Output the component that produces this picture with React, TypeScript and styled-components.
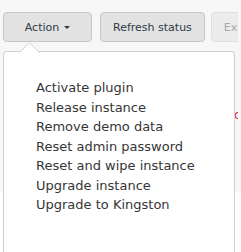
import React from "react";
import styled, { createGlobalStyle } from "styled-components";

const Global = createGlobalStyle`
  html, body { margin: 0; padding: 0; background: #ffffff; }
  body { font-family: "DejaVu Sans", "Noto Sans", sans-serif; font-size: 13px; color: #333; }
`;

const Page = styled.div`
  position: relative;
  width: 241px;
  height: 252px;
  overflow: hidden;
  background: #ffffff;
`;

const Panel = styled.div`
  height: 192px;
  background: #f7f7f7;
  padding: 12px 3px 0;
  box-sizing: border-box;
`;

const Toolbar = styled.div`
  display: flex;
  align-items: center;
  overflow: hidden;
`;

const Button = styled.button<{ $wide?: boolean; $disabled?: boolean; $gap?: number }>`
  box-sizing: border-box;
  height: 30px;
  min-width: ${(p) => (p.$wide ? "89px" : "0")};
  margin-right: ${(p) => p.$gap ?? 0}px;
  padding: 0 12px;
  display: inline-flex;
  align-items: center;
  justify-content: center;
  gap: 5px;
  flex-shrink: 0;
  font-family: inherit;
  font-size: 11px;
  color: ${(p) => (p.$disabled ? "#a6a6a6" : "#2f3a45")};
  background: ${(p) => (p.$disabled ? "#ececec" : "#e2e2e2")};
  border: 1px solid ${(p) => (p.$disabled ? "#dedede" : "#c6c6c6")};
  border-radius: 4px;
`;

const Caret = styled.span`
  width: 0;
  height: 0;
  border-left: 3px solid transparent;
  border-right: 3px solid transparent;
  border-top: 3px solid #2f3a45;
`;

const Status = styled.div`
  margin-top: 66px;
  padding-left: 194px;
  color: #d9263b;
  font-size: 12px;
  white-space: nowrap;
  overflow: hidden;
`;

const Menu = styled.ul`
  position: absolute;
  top: 51px;
  left: 3px;
  width: 232px;
  height: 201px;
  box-sizing: border-box;
  margin: 0;
  padding: 26px 0 0 32px;
  list-style: none;
  background: #fff;
  border: 1px solid #cfcfcf;
  border-bottom: none;
  border-radius: 4px 4px 0 0;
`;

const Arrow = styled.svg`
  position: absolute;
  top: -10px;
  left: 15px;
`;

const Item = styled.li`
  line-height: 19.5px;
  color: #363636;
  white-space: nowrap;
`;

const items = [
  "Activate plugin",
  "Release instance",
  "Remove demo data",
  "Reset admin password",
  "Reset and wipe instance",
  "Upgrade instance",
  "Upgrade to Kingston",
];

export default function App() {
  return (
    <>
      <Global />
      <Page>
        <Panel>
          <Toolbar>
            <Button $wide $gap={8}>
              Action <Caret />
            </Button>
            <Button $gap={6}>Refresh status</Button>
            <Button $disabled>Ext</Button>
          </Toolbar>
          <Status>Instance</Status>
        </Panel>
        <Menu>
          <Arrow width="21" height="11" viewBox="0 0 21 11">
            <path d="M0.5 10.5 L10.5 0.8 L20.5 10.5" fill="#fff" stroke="#cfcfcf" strokeWidth="1" />
            <rect x="1.5" y="10" width="18" height="1.5" fill="#fff" />
          </Arrow>
          {items.map((t) => (
            <Item key={t}>{t}</Item>
          ))}
        </Menu>
      </Page>
    </>
  );
}
